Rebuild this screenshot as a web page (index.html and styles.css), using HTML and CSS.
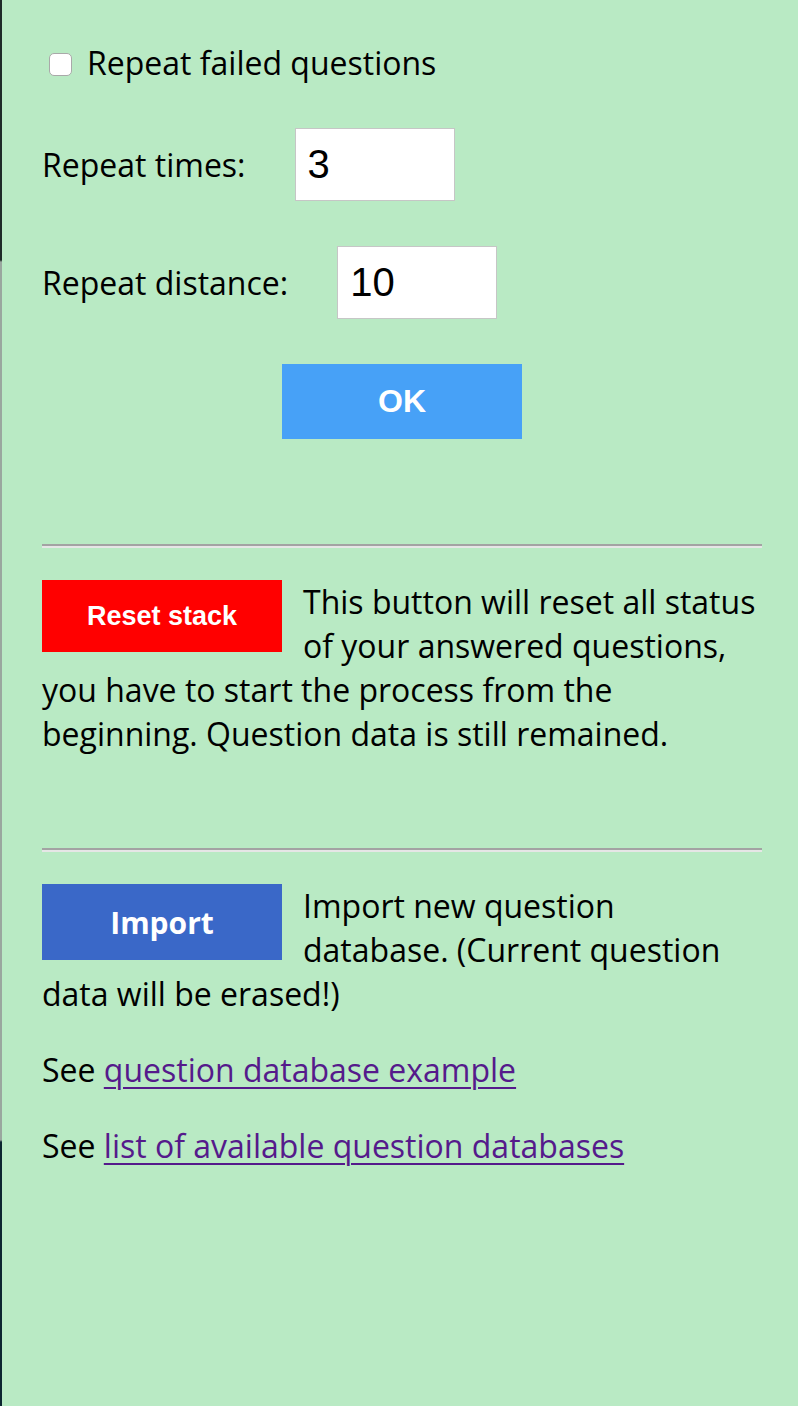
FILE: index.html
```html
<!DOCTYPE html>
<html lang="en">
<head>
<meta charset="utf-8">
<title>Settings</title>
<link rel="stylesheet" href="styles.css">
</head>
<body>
<div class="page">
  <div class="strip"></div>
  <main class="content">
    <label class="check-row"><input type="checkbox" class="check"><span>Repeat failed questions</span></label>
    <div class="field-row row-times"><span class="label">Repeat times:</span><input class="num" type="text" value="3"></div>
    <div class="field-row row-distance"><span class="label">Repeat distance:</span><input class="num" type="text" value="10"></div>
    <div class="ok-wrap"><button class="btn btn-ok">OK</button></div>
    <hr class="sep sep-first">
    <div class="section section-reset">
      <button class="btn btn-reset">Reset stack</button><span class="desc">This button will reset all status of your answered questions,</span> <span class="desc">you have to start the process from the beginning. Question data is still remained.</span>
    </div>
    <hr class="sep sep-second">
    <div class="section section-import">
      <button class="btn btn-import">Import</button><span class="desc">Import new question database. (Current question</span> <span class="desc">data will be erased!)</span>
    </div>
    <p class="see">See <a href="#">question database example</a></p>
    <p class="see">See <a href="#">list of available question databases</a></p>
  </main>
</div>
</body>
</html>
```

FILE: styles.css
```css
html, body {
  margin: 0;
  padding: 0;
}
body {
  background: #b9eac4;
  font-family: "Open Sans", "Noto Sans", sans-serif;
  font-size: 32px;
  line-height: 44px;
  color: #000;
}
.page {
  display: flex;
  min-height: 1406px;
}
.strip {
  width: 2px;
  flex: 0 0 2px;
  background: linear-gradient(to bottom, #1e2b28 0, #1e2b28 260px, #9aa79f 262px, #9aa79f 1140px, #0c2630 1142px, #0c2630 100%);
}
.content {
  flex: 1;
  padding: 41px 36px 0 40px;
  display: flex;
  flex-direction: column;
}
.check-row {
  display: flex;
  align-items: center;
  height: 44px;
}
.check {
  appearance: none;
  -webkit-appearance: none;
  width: 23px;
  height: 23px;
  margin: 2px 15px 0 7px;
  background: #fff;
  border: 1px solid #a9a9a9;
  border-radius: 5px;
  box-sizing: border-box;
}
.field-row {
  display: flex;
  align-items: center;
}
.row-times {
  margin-top: 43px;
}
.row-distance {
  margin-top: 45px;
}
.num {
  width: 160px;
  height: 73px;
  box-sizing: border-box;
  margin-left: 49px;
  border: 1px solid #c6c6c6;
  background: #fff;
  padding: 0 12px;
  font-family: "Liberation Sans", Arial, sans-serif;
  font-size: 40px;
  color: #000;
  outline: none;
}
.ok-wrap {
  display: flex;
  justify-content: center;
  margin-top: 45px;
}
.btn {
  border: none;
  color: #fff;
  font-weight: bold;
  width: 240px;
  padding: 0;
  cursor: pointer;
}
.btn-ok {
  height: 75px;
  background: #47a1f7;
  font-family: "Liberation Sans", Arial, sans-serif;
  font-size: 32px;
}
.sep {
  width: 100%;
  height: 0;
  margin: 0;
  border: none;
  border-top: 2px solid #a3a3a3;
  border-bottom: 2px solid #e6e6e6;
}
.sep-first {
  margin-top: 105px;
}
.sep-second {
  margin-top: 92px;
}
.section {
  margin-top: 32px;
}
.section .btn {
  float: left;
  margin-right: 21px;
}
.section::after {
  content: "";
  display: block;
  clear: both;
}
.btn-reset {
  height: 72px;
  background: #ff0000;
  font-family: "Liberation Sans", Arial, sans-serif;
  font-size: 27px;
}
.btn-import {
  height: 76px;
  background: #3a68c8;
  font-family: "Open Sans", sans-serif;
  font-size: 30px;
}
.see {
  margin: 32px 0 0;
}
.see a {
  color: #551a8b;
  text-decoration: underline;
  text-underline-offset: 5px;
  text-decoration-thickness: 2px;
}
```
